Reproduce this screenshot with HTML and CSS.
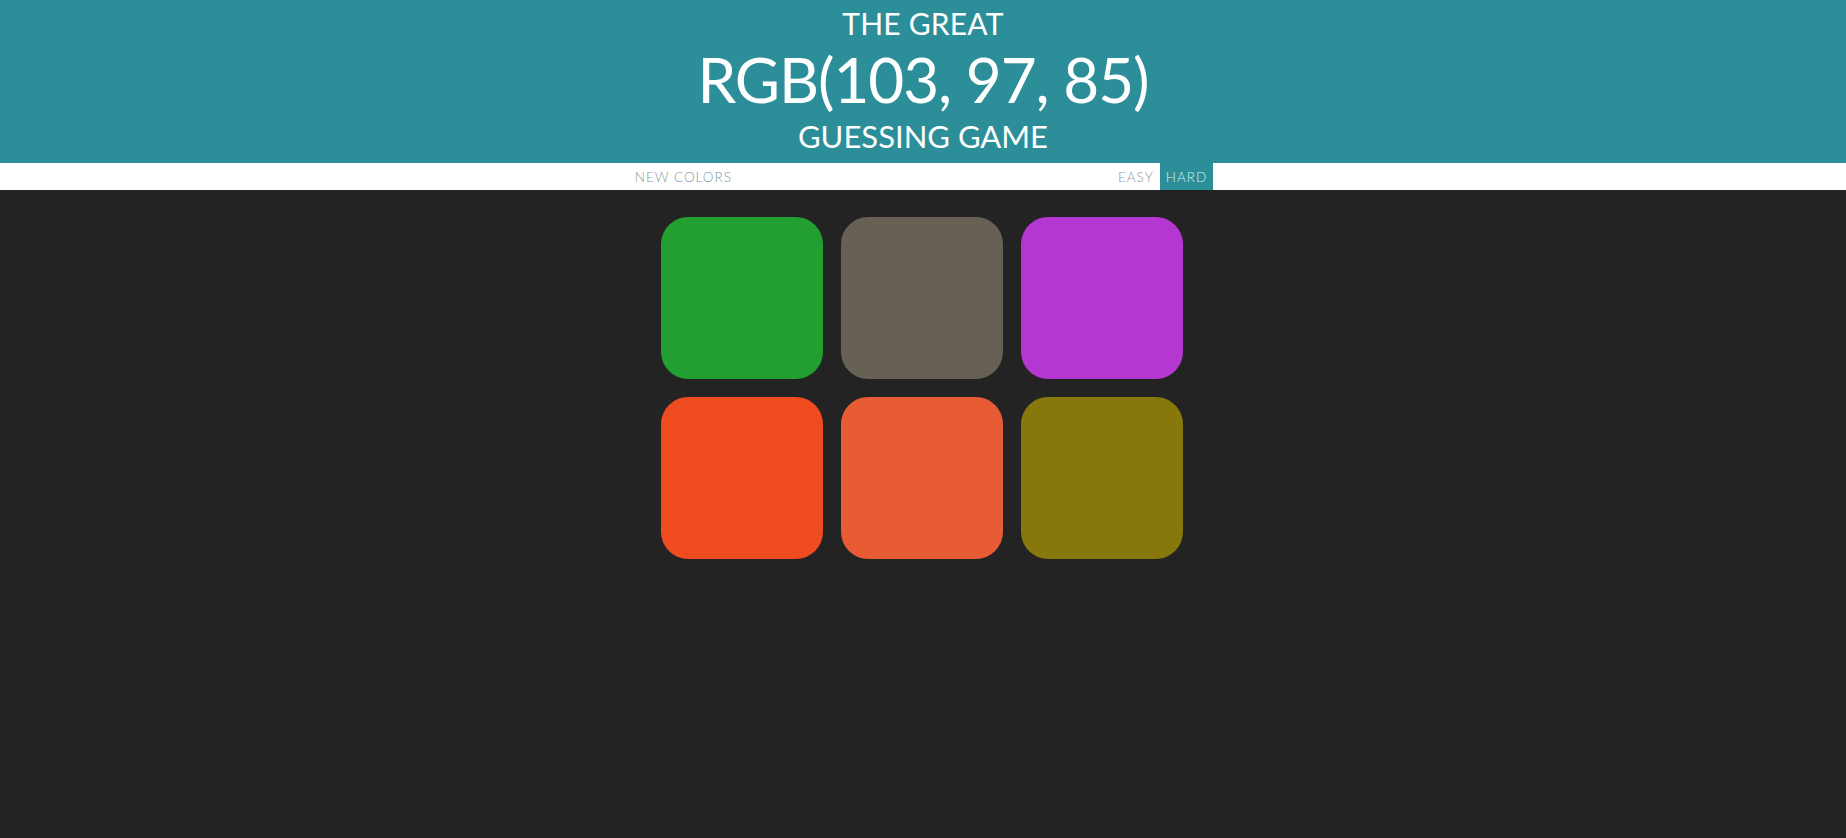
FILE: index.html
```html
<!DOCTYPE html>
<html lang="en">
<head>
<meta charset="utf-8">
<title>Color Game</title>
<link rel="stylesheet" href="styles.css">
</head>
<body>
<h1 class="title">
  <span class="title-line title-top">The Great</span>
  <span class="title-line title-rgb">RGB(103, 97, 85)</span>
  <span class="title-line title-bottom">Guessing Game</span>
</h1>
<div class="stripe">
  <button class="btn btn-reset">New Colors</button>
  <span class="message"></span>
  <button class="btn btn-mode">Easy</button>
  <button class="btn btn-mode selected">Hard</button>
</div>
<div class="board">
  <div class="square sq-green"></div>
  <div class="square sq-gray"></div>
  <div class="square sq-purple"></div>
  <div class="square sq-red"></div>
  <div class="square sq-orange"></div>
  <div class="square sq-olive"></div>
</div>
</body>
</html>
```
FILE: styles.css
```css
html, body {
  margin: 0;
  padding: 0;
}
body {
  background: #232323;
  font-family: Lato, "Open Sans", sans-serif;
  min-height: 838px;
}
.title {
  margin: 0;
  padding: 3px 0 6px;
  background: #2c8e99;
  color: #ffffff;
  text-align: center;
  text-transform: uppercase;
  font-weight: 400;
  display: flex;
  flex-direction: column;
}
.title-line {
  display: block;
}
.title-top {
  font-size: 30px;
  line-height: 40px;
  letter-spacing: 0.2px;
}
.title-rgb {
  font-size: 62px;
  line-height: 72px;
  letter-spacing: -1.1px;
}
.title-bottom {
  font-size: 31px;
  line-height: 42px;
}
.stripe {
  background: #ffffff;
  height: 27px;
  display: flex;
  justify-content: center;
  align-items: stretch;
  padding-right: 4px;
}
.btn {
  border: none;
  background: #ffffff;
  margin: 0;
  padding: 0 6px;
  font-family: Lato, "Open Sans", sans-serif;
  font-size: 13.5px;
  font-weight: 300;
  letter-spacing: 1px;
  text-transform: uppercase;
  color: #7f9a9e;
  cursor: pointer;
  outline: none;
}
.btn-mode {
  color: #8c9a9b;
}
.btn.selected {
  background: #2c8e99;
  color: #d6f1f3;
}
.message {
  width: 374px;
}
.board {
  width: 522px;
  margin: 27px 0 0 calc(50% - 262px);
  display: grid;
  grid-template-columns: repeat(3, 162px);
  grid-auto-rows: 162px;
  gap: 18px;
}
.square {
  border-radius: 27px;
}
.sq-green { background: #239e30; }
.sq-gray { background: #676155; }
.sq-purple { background: #b537d2; }
.sq-red { background: #ef4b20; }
.sq-orange { background: #e75b35; }
.sq-olive { background: #86780a; }
```
